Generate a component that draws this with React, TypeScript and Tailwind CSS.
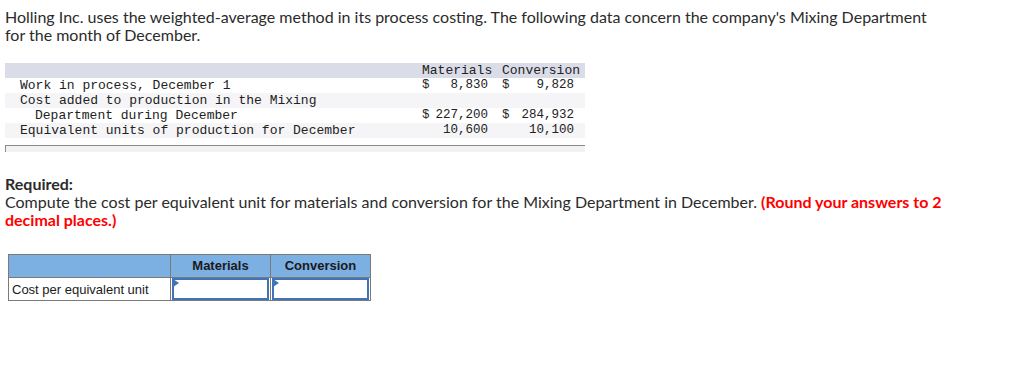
import React from 'react';

const rows = [
  { label: 'Work in process, December 1', indent: false, mat: ['$', '8,830'], conv: ['$', '9,828'], shade: false },
  { label: 'Cost added to production in the Mixing', indent: false, mat: null, conv: null, shade: true },
  { label: 'Department during December', indent: true, mat: ['$', '227,200'], conv: ['$', '284,932'], shade: false },
  { label: 'Equivalent units of production for December', indent: false, mat: ['', '10,600'], conv: ['', '10,100'], shade: true },
];

function Val({ v }: { v: string[] | null }) {
  if (!v) return null;
  return (
    <div className="flex justify-between pr-[4px]">
      <span>{v[0]}</span>
      <span>{v[1]}</span>
    </div>
  );
}

function InputCell() {
  return (
    <td className="border border-[#7a7a7a] p-0 h-[23px]">
      <div className="relative h-[22px] mx-[1px] border-2 border-[#3f74b8] bg-white">
        <span className="absolute left-[-1px] top-[-1px] w-0 h-0 border-t-[4px] border-b-[4px] border-l-[6px] border-t-transparent border-b-transparent border-l-[#3f74b8]" />
      </div>
    </td>
  );
}

export default function App() {
  return (
    <div className="w-[1024px] h-[383px] bg-white text-[#2b2b2b] font-['Lato',sans-serif] text-[16px] leading-[18px] pt-[8px]">
      <p className="ml-[5px] w-[935px]">
        Holling Inc. uses the weighted-average method in its process costing. The following data concern the company's Mixing Department for the month of December.
      </p>

      {/* data table */}
      <div className="ml-[5px] mt-[19px] w-[580px] font-['Liberation_Mono',monospace] text-[13px] leading-[15px] text-[#222]">
        <div className="flex h-[15px] bg-[#dadce8]">
          <div className="w-[417px]" />
          <div className="w-[80px]">Materials</div>
          <div className="flex-1">Conversion</div>
        </div>
        {rows.map((r) => (
          <div key={r.label} className={`flex h-[15px] ${r.shade ? 'bg-[#f5f5f7]' : 'bg-white'}`}>
            <div className={`w-[417px] whitespace-pre ${r.indent ? 'pl-[30px]' : 'pl-[15px]'}`}>{r.label}</div>
            <div className="w-[70px] text-[12.5px]">
              <Val v={r.mat} />
            </div>
            <div className="w-[10px]" />
            <div className="w-[76px] text-[12.5px]">
              <Val v={r.conv} />
            </div>
          </div>
        ))}
        <div className="h-[7px]" />
        <div className="h-[7px] border-t border-l border-[#8a8a8a] bg-[#f2f2f2]" />
      </div>

      <div className="ml-[5px] mt-[23px] w-[960px]">
        <div className="font-bold">Required:</div>
        <p>
          Compute the cost per equivalent unit for materials and conversion for the Mixing Department in December.{' '}
          <span className="font-bold text-[#ff0000]">(Round your answers to 2 decimal places.)</span>
        </p>
      </div>

      {/* answer table */}
      <table className="ml-[8px] mt-[25px] border-collapse font-['Liberation_Sans',sans-serif] text-[13px] text-[#1a1a1a]">
        <tbody>
          <tr className="bg-[#7cafe2] h-[23px]">
            <th className="border border-[#7a7a7a] w-[162px]" />
            <th className="border border-[#7a7a7a] w-[100px] font-bold text-center">Materials</th>
            <th className="border border-[#7a7a7a] w-[100px] font-bold text-center">Conversion</th>
          </tr>
          <tr>
            <td className="border border-[#7a7a7a] pl-[3px] pt-[2px] h-[23px] bg-white">Cost per equivalent unit</td>
            <InputCell />
            <InputCell />
          </tr>
        </tbody>
      </table>
    </div>
  );
}
